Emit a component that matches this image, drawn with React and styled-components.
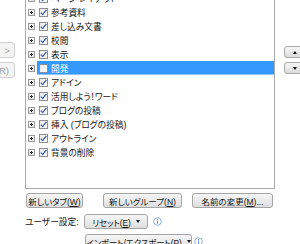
import styled, { createGlobalStyle, css } from "styled-components";

const GlobalStyle = createGlobalStyle`
  html, body {
    margin: 0;
    background: #ffffff;
    overflow: hidden;
  }
  body {
    font-family: "Liberation Sans", "Noto Sans CJK JP", sans-serif;
    font-feature-settings: "palt";
    color: #141414;
  }
`;

const Page = styled.div`
  width: 300px;
  height: 255px;
  margin-top: -11px;
  overflow: hidden;
  font-size: 8.7px;
`;

const TopArea = styled.div`
  display: flex;
  align-items: flex-start;
`;

const SideCol = styled.div`
  width: 15px;
  flex-shrink: 0;
  overflow: hidden;
  display: flex;
  flex-direction: column;
  align-items: flex-end;
  gap: 4px;
  padding-top: 53px;
`;

const SideButton = styled.div`
  flex-shrink: 0;
  width: 60px;
  height: 16px;
  box-sizing: border-box;
  border: 1px solid #cfcfcf;
  border-radius: 3px;
  background: #f4f4f4;
  color: #a3a3a3;
  display: flex;
  align-items: center;
  justify-content: flex-end;
  padding-right: ${(p) => p.$pr}px;
  white-space: nowrap;
  font-size: 9.5px;
`;

const Arrows = styled.span`
  margin-left: 10px;
`;

const TreeBox = styled.div`
  margin-left: 10px;
  width: 250px;
  height: 200px;
  box-sizing: border-box;
  border: 1px solid #a9a9a9;
  background: #ffffff;
  padding-top: 1px;
  flex-shrink: 0;
`;

const Row = styled.div`
  height: 14px;
  display: flex;
  align-items: center;
`;

const Expander = styled.div`
  width: 7px;
  height: 7px;
  box-sizing: border-box;
  margin-left: 2px;
  border: 1px solid #9a9a9a;
  background: linear-gradient(#ffffff, #e6e6e6);
  position: relative;
  flex-shrink: 0;

  &::before,
  &::after {
    content: "";
    position: absolute;
    background: #2a2a2a;
  }
  &::before {
    left: 1px;
    top: 2px;
    width: 3px;
    height: 1px;
  }
  &::after {
    left: 2px;
    top: 1px;
    width: 1px;
    height: 3px;
  }
`;

const ItemBody = styled.div`
  flex: 1;
  height: 14px;
  margin-left: 2px;
  padding-left: 2px;
  display: flex;
  align-items: center;
  gap: 3px;
  white-space: nowrap;

  ${(p) =>
    p.$selected &&
    css`
      background: #3399ff;
      color: #ffffff;
      box-shadow: inset 0 -1px 0 #8fc6ff;
    `}
`;

const Check = styled.div`
  width: 9px;
  height: 9px;
  box-sizing: border-box;
  border: 1px solid #8e8f8f;
  background: linear-gradient(135deg, #e9e9e9, #ffffff);
  flex-shrink: 0;
  display: flex;
  align-items: center;
  justify-content: center;
`;

const RightCol = styled.div`
  margin-left: 9px;
  padding-top: 57px;
  display: flex;
  flex-direction: column;
  gap: 4px;
  flex-shrink: 0;
`;

const MoveButton = styled.div`
  width: 22px;
  height: 12px;
  box-sizing: border-box;
  border: 1px solid #a8a8a8;
  border-radius: 3px;
  background: linear-gradient(#f7f7f7, #dcdcdc);
  display: flex;
  align-items: center;
  justify-content: center;
`;

const Tri = styled.span`
  width: 0;
  height: 0;
  border-left: 2.5px solid transparent;
  border-right: 2.5px solid transparent;
  ${(p) =>
    p.$up
      ? css`
          border-bottom: 3px solid #1a1a1a;
        `
      : css`
          border-top: 3px solid #1a1a1a;
        `}
`;

const ButtonRow = styled.div`
  display: flex;
  margin-top: 4px;
  padding-left: 26px;
  font-size: 8.5px;
`;

const Button = styled.div`
  width: ${(p) => p.$w}px;
  margin-left: ${(p) => p.$ml || 0}px;
  height: 15px;
  box-sizing: border-box;
  border: 1px solid #a5a5a5;
  border-radius: 3px;
  background: linear-gradient(#f6f6f6 0%, #ebebeb 50%, #dddddd 100%);
  display: flex;
  align-items: center;
  justify-content: center;
  gap: 5px;
  white-space: nowrap;
  flex-shrink: 0;
`;

const Key = styled.span`
  text-decoration: underline;
`;

const SettingRow = styled.div`
  display: flex;
  align-items: center;
  padding-left: 25px;
  margin-top: ${(p) => p.$mt}px;
  font-size: 8.7px;
`;

const Label = styled.span`
  width: 59px;
  white-space: nowrap;
`;

const Indent = styled.span`
  width: 60px;
`;

const ButtonText = styled.span`
  font-size: 8.4px;
  letter-spacing: -0.1px;
`;

const InfoWrap = styled.span`
  margin-left: ${(p) => p.$ml}px;
  display: flex;
`;

function Info({ ml }) {
  return (
    <InfoWrap $ml={ml}>
      <svg width="9" height="9" viewBox="0 0 9 9">
        <circle cx="4.5" cy="4.5" r="3.8" fill="#fff" stroke="#7da7e0" strokeWidth="0.9" />
        <rect x="4.1" y="2" width="0.9" height="0.9" fill="#4a7fcf" />
        <rect x="4.1" y="3.6" width="0.9" height="3.2" fill="#4a7fcf" />
      </svg>
    </InfoWrap>
  );
}

function CheckMark() {
  return (
    <svg width="7" height="7" viewBox="0 0 7 7">
      <path d="M0.8 3.6 L2.7 5.6 L6.3 0.9" fill="none" stroke="#3a5fa8" strokeWidth="1.3" />
    </svg>
  );
}

const items = [
  { label: "ページ レイアウト", checked: true },
  { label: "参考資料", checked: true },
  { label: "差し込み文書", checked: true },
  { label: "校閲", checked: true },
  { label: "表示", checked: true },
  { label: "開発", checked: false, selected: true },
  { label: "アドイン", checked: true },
  { label: "活用しよう！ワード", checked: true },
  { label: "ブログの投稿", checked: true },
  { label: "挿入 (ブログの投稿)", checked: true },
  { label: "アウトライン", checked: true },
  { label: "背景の削除", checked: true },
];

function App() {
  return (
    <>
      <GlobalStyle />
      <Page>
        <TopArea>
          <SideCol>
            <SideButton $pr={4}>
              追加(A)<Arrows>&gt;</Arrows>
            </SideButton>
            <SideButton $pr={5}>&lt;&lt; 削除(R)</SideButton>
          </SideCol>
          <TreeBox>
            {items.map((item) => (
              <Row key={item.label}>
                <Expander />
                <ItemBody $selected={item.selected}>
                  <Check>{item.checked && <CheckMark />}</Check>
                  <span>{item.label}</span>
                </ItemBody>
              </Row>
            ))}
          </TreeBox>
          <RightCol>
            <MoveButton>
              <Tri $up />
            </MoveButton>
            <MoveButton>
              <Tri />
            </MoveButton>
          </RightCol>
        </TopArea>

        <ButtonRow>
          <Button $w={57}>
            <span>
              新しいタブ(<Key>W</Key>)
            </span>
          </Button>
          <Button $w={79} $ml={20}>
            <span>
              新しいグループ(<Key>N</Key>)
            </span>
          </Button>
          <Button $w={81} $ml={10}>
            <span>
              名前の変更(<Key>M</Key>)...
            </span>
          </Button>
        </ButtonRow>

        <SettingRow $mt={6}>
          <Label>ユーザー設定:</Label>
          <Button $w={64}>
            <ButtonText>
              リセット(<Key>E</Key>)
            </ButtonText>
            <Tri />
          </Button>
          <Info ml={5} />
        </SettingRow>

        <SettingRow $mt={5}>
          <Indent />
          <Button $w={107}>
            <ButtonText>
              インポート/エクスポート(<Key>P</Key>)
            </ButtonText>
            <Tri />
          </Button>
          <Info ml={2} />
        </SettingRow>
      </Page>
    </>
  );
}

export default App;
